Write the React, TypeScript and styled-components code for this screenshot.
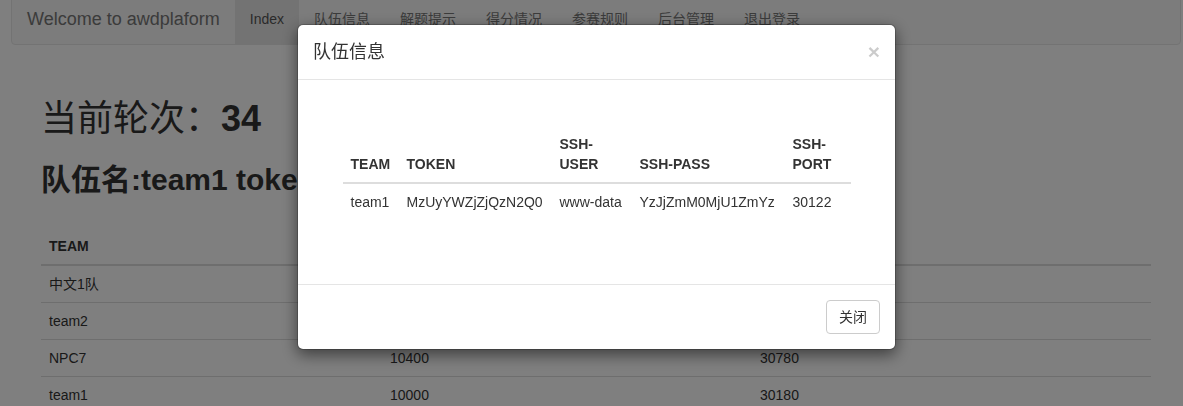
import React from "react";
import styled, { createGlobalStyle } from "styled-components";

const GlobalStyle = createGlobalStyle`
  html, body {
    margin: 0;
    padding: 0;
    background: #fff;
  }
  body {
    font-family: "Liberation Sans", Arial, "Noto Sans CJK SC", sans-serif;
    font-size: 14px;
    line-height: 1.42857;
    color: #333;
    overflow: hidden;
  }
  * { box-sizing: border-box; }
`;

const Page = styled.div`
  margin-top: -7px;
  padding: 0 2px 0 11px;
`;

const Navbar = styled.nav`
  display: flex;
  align-items: stretch;
  min-height: 52px;
  background: #f8f8f8;
  border: 1px solid #e7e7e7;
  border-radius: 4px;
`;

const Brand = styled.a`
  display: block;
  padding: 15px;
  height: 50px;
  font-size: 18px;
  line-height: 20px;
  color: #777;
  text-decoration: none;
`;

const NavList = styled.ul`
  display: flex;
  margin: 0;
  padding: 0;
  list-style: none;
`;

const NavLink = styled.a<{ $active?: boolean }>`
  display: block;
  padding: 15px;
  line-height: 20px;
  font-size: 14px;
  color: ${(p) => (p.$active ? "#555" : "#777")};
  background: ${(p) => (p.$active ? "#e7e7e7" : "transparent")};
  text-decoration: none;
`;

const Content = styled.main`
  margin: 0 30px;
`;

const RoundTitle = styled.h1`
  margin: 54px 0 0;
  font-size: 36px;
  font-weight: 400;
  line-height: 1.1;
  strong {
    font-weight: 700;
  }
`;

const TeamTitle = styled.h2`
  margin: 24px 0 0;
  font-size: 30px;
  font-weight: 700;
  line-height: 1.1;
  white-space: nowrap;
`;

const ScoreTable = styled.table`
  width: 100%;
  margin-top: 32px;
  border-collapse: collapse;
  table-layout: fixed;
`;

const Th = styled.th<{ $w?: number }>`
  width: ${(p) => (p.$w ? `${p.$w}px` : "auto")};
  padding: 8px;
  text-align: left;
  vertical-align: bottom;
  font-weight: 700;
  line-height: 20px;
  text-transform: uppercase;
  border-bottom: 2px solid #ddd;
`;

const Td = styled.td`
  padding: 8px;
  line-height: 20px;
  vertical-align: top;
  border-top: 1px solid #ddd;
  white-space: nowrap;
`;

const Backdrop = styled.div`
  position: fixed;
  inset: 0;
  background: rgba(0, 0, 0, 0.5);
`;

const Dialog = styled.div`
  position: absolute;
  left: 297px;
  top: 24px;
  width: 599px;
  background: #fff;
  border: 1px solid rgba(0, 0, 0, 0.2);
  border-radius: 6px;
  box-shadow: 0 5px 15px rgba(0, 0, 0, 0.5);
  background-clip: padding-box;
`;

const DialogHeader = styled.div`
  display: flex;
  align-items: center;
  justify-content: space-between;
  padding: 15px;
  border-bottom: 1px solid #e5e5e5;
`;

const DialogTitle = styled.h4`
  margin: 0;
  font-size: 18px;
  font-weight: 400;
  line-height: 24px;
`;

const CloseButton = styled.button`
  padding: 0;
  margin-top: -2px;
  border: 0;
  background: transparent;
  font-family: inherit;
  font-size: 21px;
  font-weight: 700;
  line-height: 1;
  color: #000;
  opacity: 0.2;
  cursor: pointer;
`;

const DialogBody = styled.div`
  padding: 15px;
`;

const InfoTable = styled.table`
  width: 508px;
  margin: 31px auto 49px;
  border-collapse: collapse;
  table-layout: fixed;
`;

const DialogFooter = styled.div`
  display: flex;
  justify-content: flex-end;
  padding: 15px;
  border-top: 1px solid #e5e5e5;
`;

const Button = styled.button`
  padding: 6px 12px;
  font-family: inherit;
  font-size: 14px;
  line-height: 20px;
  color: #333;
  background: #fff;
  border: 1px solid #ccc;
  border-radius: 4px;
  cursor: pointer;
`;

const navItems = ["Index", "队伍信息", "解题提示", "得分情况", "参赛规则", "后台管理", "退出登录"];

const scores = [
  { team: "中文1队", score: "10800", total: "31180" },
  { team: "team2", score: "10600", total: "30980" },
  { team: "NPC7", score: "10400", total: "30780" },
  { team: "team1", score: "10000", total: "30180" },
];

export default function App() {
  return (
    <>
      <GlobalStyle />
      <Page>
        <Navbar>
          <Brand href="#">Welcome to awdplaform</Brand>
          <NavList>
            {navItems.map((item, i) => (
              <li key={item}>
                <NavLink href="#" $active={i === 0}>
                  {item}
                </NavLink>
              </li>
            ))}
          </NavList>
        </Navbar>
        <Content>
          <RoundTitle>
            当前轮次：<strong>34</strong>
          </RoundTitle>
          <TeamTitle>队伍名:team1 token</TeamTitle>
          <ScoreTable>
            <thead>
              <tr>
                <Th $w={341}>team</Th>
                <Th $w={370}>score</Th>
                <Th>total</Th>
              </tr>
            </thead>
            <tbody>
              {scores.map((r) => (
                <tr key={r.team}>
                  <Td>{r.team}</Td>
                  <Td>{r.score}</Td>
                  <Td>{r.total}</Td>
                </tr>
              ))}
            </tbody>
          </ScoreTable>
        </Content>
      </Page>
      <Backdrop>
        <Dialog role="dialog">
          <DialogHeader>
            <DialogTitle>队伍信息</DialogTitle>
            <CloseButton aria-label="Close">×</CloseButton>
          </DialogHeader>
          <DialogBody>
            <InfoTable>
              <thead>
                <tr>
                  <Th $w={56}>team</Th>
                  <Th $w={153}>token</Th>
                  <Th $w={80}>ssh-user</Th>
                  <Th $w={153}>ssh-pass</Th>
                  <Th $w={66}>ssh-port</Th>
                </tr>
              </thead>
              <tbody>
                <tr>
                  <Td>team1</Td>
                  <Td>MzUyYWZjZjQzN2Q0</Td>
                  <Td>www-data</Td>
                  <Td>YzJjZmM0MjU1ZmYz</Td>
                  <Td>30122</Td>
                </tr>
              </tbody>
            </InfoTable>
          </DialogBody>
          <DialogFooter>
            <Button>关闭</Button>
          </DialogFooter>
        </Dialog>
      </Backdrop>
    </>
  );
}
